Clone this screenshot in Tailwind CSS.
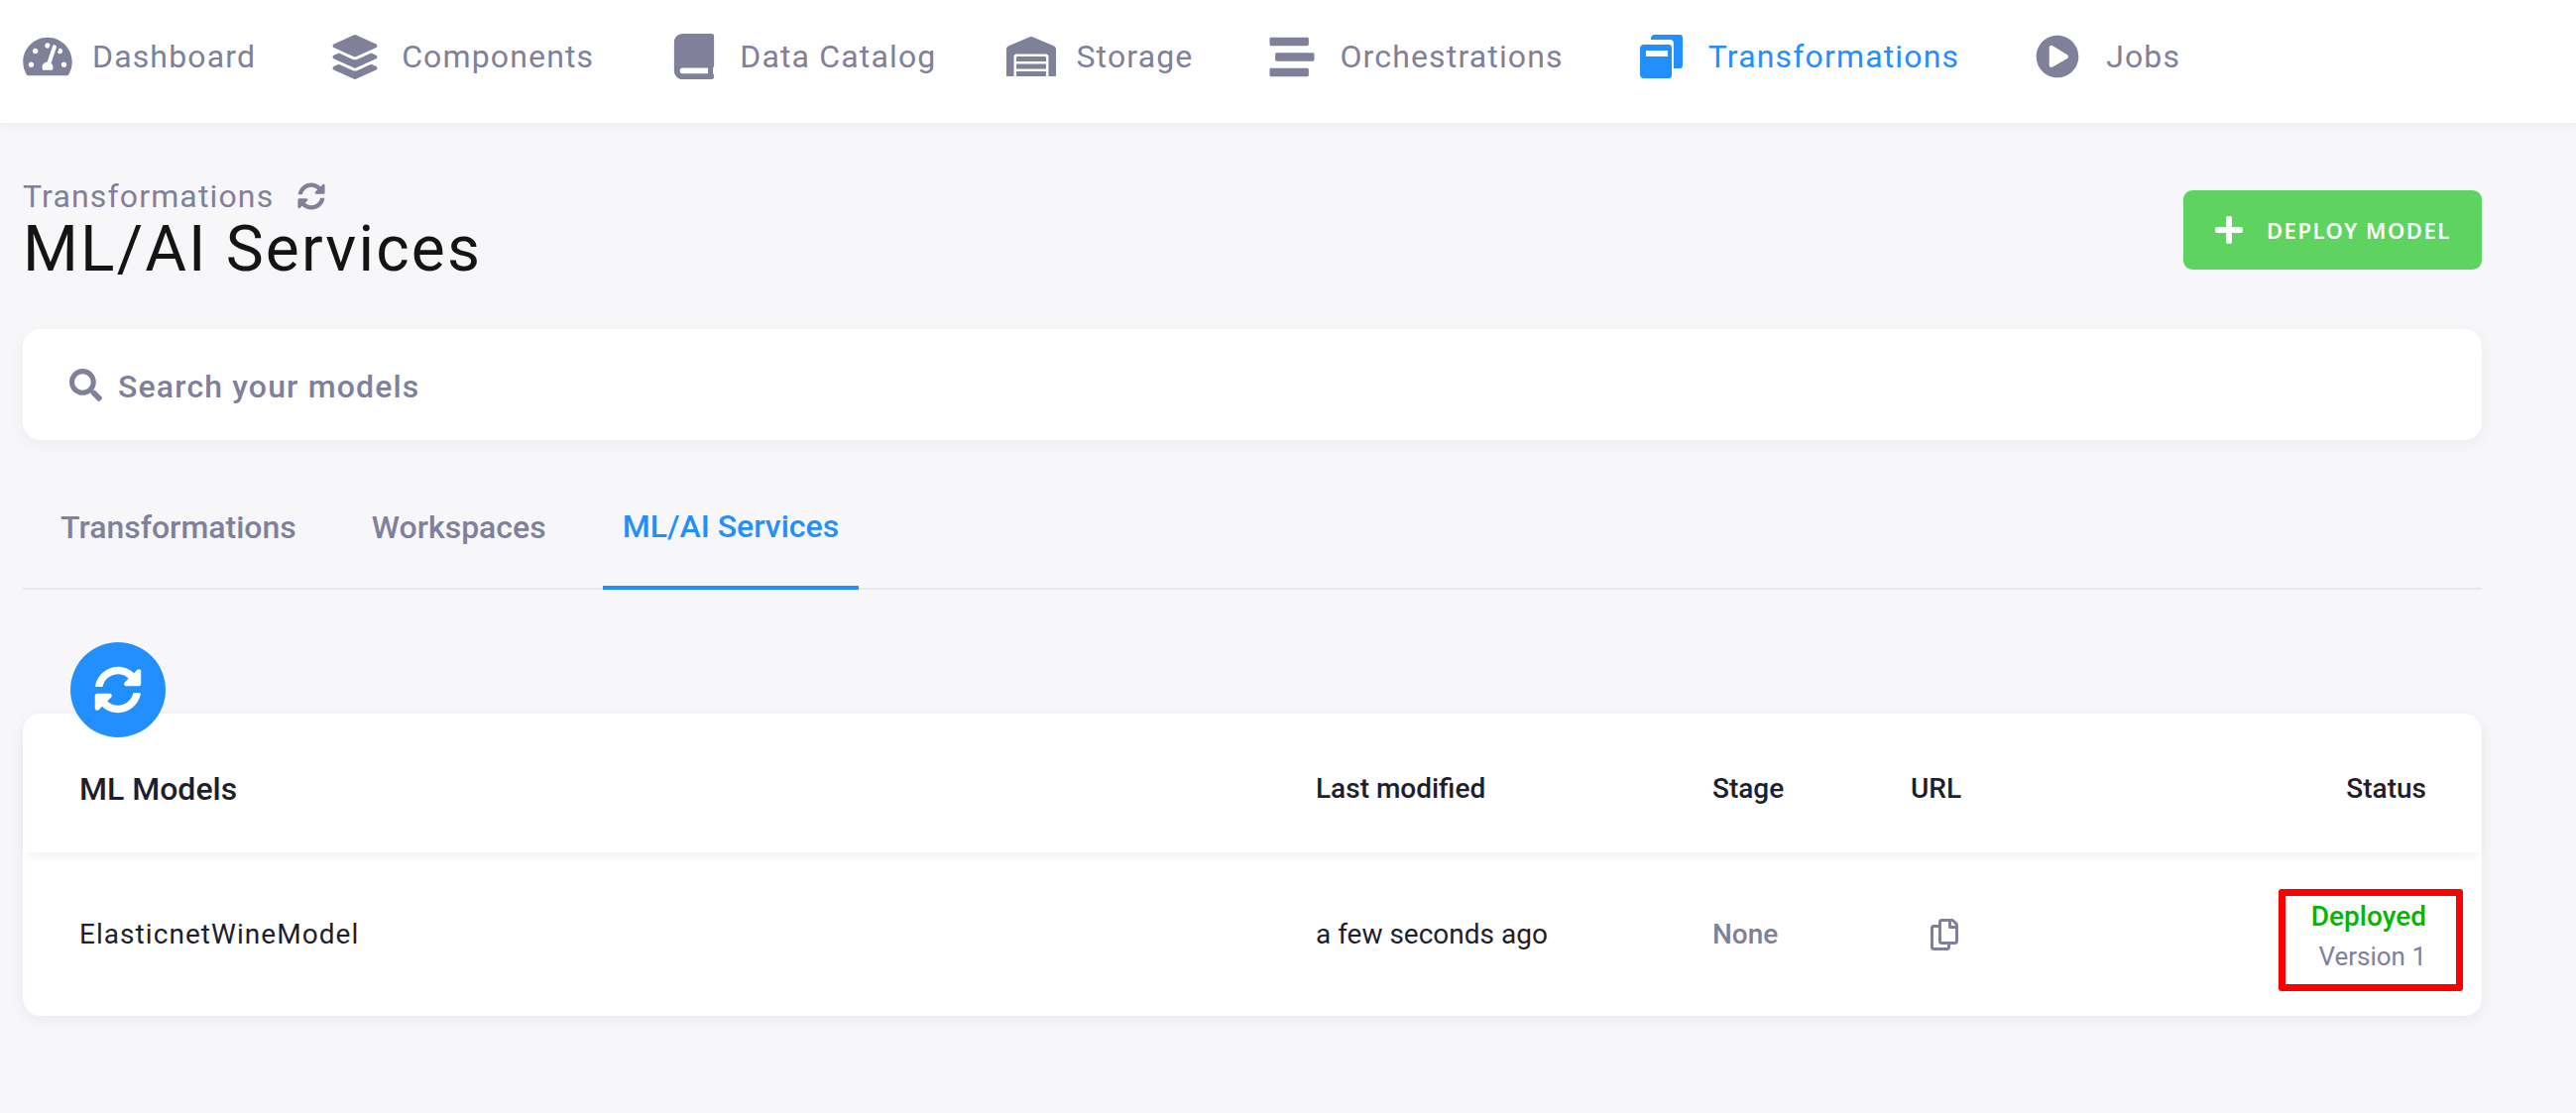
<!DOCTYPE html>
<html lang="en">
<head>
    <meta charset="UTF-8" />
    <title>ML/AI Services</title>
    <script src="https://cdn.jsdelivr.net/npm/@tailwindcss/browser@4"></script>
</head>
<body class="bg-[#f7f7fa] min-h-screen font-['Roboto',sans-serif] overflow-hidden">
    <!-- top nav -->
    <nav class="h-[124px] bg-white shadow-[0_2px_8px_rgba(30,30,60,0.06)] flex items-center pl-[23px] pb-[10px] text-[32px] tracking-[1.15px] text-[#80809a]">
        <a class="flex items-center gap-[20px] mr-[75px]">
            <svg class="w-[50px] h-[44px]" viewBox="0 0 576 512" fill="currentColor"><path d="M288 32C128.94 32 0 160.94 0 320c0 52.8 14.25 102.26 39.06 144.8 5.61 9.62 16.3 15.2 27.44 15.2h443c11.14 0 21.83-5.58 27.44-15.2C561.75 422.26 576 372.8 576 320c0-159.06-128.94-288-288-288zm0 64c14.71 0 26.58 10.13 30.32 23.65-1.11 2.26-2.64 4.23-3.45 6.67l-9.22 27.67c-5.13 3.49-10.97 6.01-17.64 6.01-17.67 0-32-14.33-32-32S270.33 96 288 96zM96 384c-17.67 0-32-14.33-32-32s14.33-32 32-32 32 14.33 32 32-14.33 32-32 32zm48-160c-17.67 0-32-14.33-32-32s14.33-32 32-32 32 14.33 32 32-14.33 32-32 32zm246.77-72.41l-61.33 184C343.13 347.33 352 364.54 352 384c0 11.72-3.38 22.55-8.88 32H232.88c-5.5-9.45-8.88-20.28-8.88-32 0-33.94 26.5-61.43 59.9-63.59l61.34-184.01c4.17-12.56 17.73-19.45 30.36-15.17 12.57 4.19 19.35 17.79 15.17 30.36zm14.66 57.2l15.52-46.55c3.47-1.29 7.13-2.23 11.05-2.23 17.67 0 32 14.33 32 32s-14.33 32-32 32c-11.38-.01-20.89-6.28-26.57-15.22zM480 384c-17.67 0-32-14.33-32-32s14.33-32 32-32 32 14.33 32 32-14.33 32-32 32z"/></svg>
            <span>Dashboard</span>
        </a>
        <a class="flex items-center gap-[22px] mr-[76px]">
            <svg class="w-[50px] h-[45px]" viewBox="0 0 512 512" fill="currentColor"><path d="M12.41 148.02l232.94 105.67c6.8 3.09 14.49 3.09 21.29 0l232.94-105.67c16.55-7.51 16.55-32.52 0-40.03L266.65 2.31a25.607 25.607 0 0 0-21.29 0L12.41 107.98c-16.55 7.51-16.55 32.53 0 40.04zm487.18 88.28l-58.09-26.33-161.64 73.27c-7.56 3.43-15.59 5.17-23.86 5.17s-16.29-1.74-23.86-5.17L70.51 209.97l-58.1 26.33c-16.55 7.5-16.55 32.5 0 40l232.94 105.59c6.8 3.08 14.49 3.08 21.29 0L499.59 276.3c16.55-7.5 16.55-32.5 0-40zm0 127.8l-57.87-26.23-161.86 73.37c-7.56 3.43-15.59 5.17-23.86 5.17s-16.29-1.74-23.86-5.17L70.29 337.87 12.41 364.1c-16.55 7.5-16.55 32.5 0 40l232.94 105.59c6.8 3.08 14.49 3.08 21.29 0L499.59 404.1c16.55-7.5 16.55-32.5 0-40z"/></svg>
            <span>Components</span>
        </a>
        <a class="flex items-center gap-[21px] mr-[71px]">
            <svg class="w-[50px] h-[46px]" viewBox="0 0 448 512" fill="currentColor"><path d="M448 360V24c0-13.3-10.7-24-24-24H96C43 0 0 43 0 96v320c0 53 43 96 96 96h328c13.3 0 24-10.7 24-24v-16c0-7.5-3.5-14.3-8.9-18.7-4.2-15.4-4.2-59.3 0-74.7 5.4-4.3 8.9-11.1 8.9-18.6zM381.4 448H96c-17.7 0-32-14.3-32-32 0-17.6 14.4-32 32-32h285.4c-1.9 17.1-1.9 46.9 0 64z"/></svg>
            <span>Data Catalog</span>
        </a>
        <a class="flex items-center gap-[20px] mr-[75px]">
            <svg class="w-[50px] h-[40px]" viewBox="0 0 640 512" fill="currentColor"><path d="M504 352H136.4c-4.4 0-8 3.6-8 8l-.1 48c0 4.4 3.6 8 8 8H504c4.4 0 8-3.6 8-8v-48c0-4.4-3.6-8-8-8zm0 96H136.1c-4.4 0-8 3.6-8 8l-.1 48c0 4.4 3.6 8 8 8h368c4.4 0 8-3.6 8-8v-48c0-4.4-3.6-8-8-8zm0-192H136.6c-4.4 0-8 3.6-8 8l-.1 48c0 4.4 3.6 8 8 8H504c4.4 0 8-3.6 8-8v-48c0-4.4-3.6-8-8-8zm106.5-139L338.4 3.7a48.15 48.15 0 0 0-36.9 0L29.5 117C11.7 124.5 0 141.9 0 161.3V504c0 4.4 3.6 8 8 8h80c4.4 0 8-3.6 8-8V256c0-17.6 14.6-32 32.6-32h382.8c18 0 32.6 14.4 32.6 32v248c0 4.4 3.6 8 8 8h80c4.4 0 8-3.6 8-8V161.3c0-19.4-11.7-36.8-29.5-44.3z"/></svg>
            <span>Storage</span>
        </a>
        <a class="flex items-center gap-[23px] mr-[73px]">
            <svg class="w-[50px] h-[45px]" viewBox="0 0 512 512" fill="currentColor"><path d="M16 128h416c8.84 0 16-7.16 16-16V48c0-8.84-7.16-16-16-16H16C7.16 32 0 39.16 0 48v64c0 8.84 7.16 16 16 16zm480 80H80c-8.84 0-16 7.16-16 16v64c0 8.84 7.16 16 16 16h416c8.84 0 16-7.16 16-16v-64c0-8.84-7.16-16-16-16zm-64 176H16c-8.84 0-16 7.16-16 16v64c0 8.84 7.16 16 16 16h416c8.84 0 16-7.16 16-16v-64c0-8.84-7.16-16-16-16z"/></svg>
            <span>Orchestrations</span>
        </a>
        <a class="flex items-center gap-[23px] mr-[74px] text-[#228fff]">
            <svg class="w-[50px] h-[44px]" viewBox="0 0 50 44" fill="currentColor"><path d="M19 0h25a3 3 0 0 1 3 3v28a3 3 0 0 1-3 3h-6V9a4 4 0 0 0-4-4H15V4a4 4 0 0 1 4-4z"/><path fill-rule="evenodd" d="M8 10h25a3 3 0 0 1 3 3v28a3 3 0 0 1-3 3H8a4 4 0 0 1-4-4V14a4 4 0 0 1 4-4zm2 6v6h22v-6z"/></svg>
            <span>Transformations</span>
        </a>
        <a class="flex items-center gap-[24px]">
            <svg class="w-[50px] h-[44px]" viewBox="0 0 512 512" fill="currentColor"><path d="M256 8C119 8 8 119 8 256s111 248 248 248 248-111 248-248S393 8 256 8zm115.7 272l-176 101c-15.8 8.8-35.7-2.5-35.7-20V149c0-17.4 19.8-28.8 35.7-20l176 107c16.4 9.2 16.4 32.9 0 44z"/></svg>
            <span>Jobs</span>
        </a>
    </nav>

    <main class="w-[2480px] ml-[23px]">
        <!-- page header -->
        <div class="flex justify-between items-start pt-[56px] h-[208px]">
            <div>
                <div class="flex items-center gap-[24px] h-[36px] text-[32px] tracking-[1.15px] text-[#80809a]">
                    <span>Transformations</span>
                    <svg class="w-[28px] h-[28px]" viewBox="0 0 512 512" fill="currentColor"><path d="M370.72 133.28C339.458 104.008 298.888 87.962 255.848 88c-77.458.068-144.328 53.178-162.791 126.85-1.344 5.363-6.122 9.15-11.651 9.15H24.103c-7.498 0-13.194-6.807-11.807-14.176C33.933 94.924 134.813 8 256 8c66.448 0 126.791 26.136 171.315 68.685L463.03 40.97C478.149 25.851 504 36.559 504 57.941V192c0 13.255-10.745 24-24 24H345.941c-21.382 0-32.09-25.851-16.971-40.971l41.75-41.749zM32 296h134.059c21.382 0 32.09 25.851 16.971 40.971l-41.75 41.75c31.262 29.273 71.835 45.319 114.876 45.28 77.418-.07 144.315-53.144 162.787-126.849 1.344-5.363 6.122-9.15 11.651-9.15h57.304c7.498 0 13.194 6.807 11.807 14.176C478.067 417.076 377.187 504 256 504c-66.448 0-126.791-26.136-171.315-68.685L48.97 471.03C33.851 486.149 8 475.441 8 454.059V320c0-13.255 10.745-24 24-24z"/></svg>
                </div>
                <h1 class="text-[64px] leading-[72px] tracking-[2.15px] text-[#141414] font-normal">ML/AI Services</h1>
            </div>
            <button class="mt-[12px] w-[301px] h-[80px] rounded-[9px] bg-[#5fd35f] text-white flex items-center pl-[32px] gap-[24px] font-['Noto_Sans',sans-serif] font-semibold text-[22px] tracking-[1.5px]">
                <svg class="w-[28px] h-[28px]" viewBox="0 0 28 28" fill="currentColor"><rect x="11" width="6" height="28" rx="2"/><rect y="11" width="28" height="6" rx="2"/></svg>
                DEPLOY MODEL
            </button>
        </div>

        <!-- search -->
        <div class="h-[112px] bg-white rounded-[18px] shadow-[0_4px_16px_rgba(30,30,60,0.05)] flex items-center pl-[47px] gap-[16px] text-[#80809a]">
            <svg class="w-[33px] h-[33px]" viewBox="0 0 512 512" fill="currentColor"><path d="M505 442.7L405.3 343c-4.5-4.5-10.6-7-17-7H372c27.6-35.3 44-79.7 44-128C416 93.1 322.9 0 208 0S0 93.1 0 208s93.1 208 208 208c48.3 0 92.7-16.4 128-44v16.3c0 6.4 2.5 12.5 7 17l99.7 99.7c9.4 9.4 24.6 9.4 33.9 0l28.3-28.3c9.4-9.4 9.4-24.6.1-34zM208 336c-70.7 0-128-57.2-128-128 0-70.7 57.2-128 128-128 70.7 0 128 57.2 128 128 0 70.7-57.2 128-128 128z"/></svg>
            <span class="relative top-[2px] text-[32px] font-medium tracking-[1.15px]">Search your models</span>
        </div>

        <!-- tabs -->
        <div class="mt-[32px] h-[119px] border-b-2 border-[#e6e7ee] flex text-[32px] font-medium text-[#80809a]">
            <a class="px-[38px] pb-[8px] flex items-center h-[119px]">Transformations</a>
            <a class="px-[38px] pb-[8px] flex items-center h-[119px]">Workspaces</a>
            <a class="ml-[19px] px-[20px] pb-[6px] flex items-center h-[119px] text-[#228fff] border-b-4 border-[#228fff]">ML/AI Services</a>
        </div>

        <!-- models table -->
        <div class="relative mt-[125px] h-[305px] bg-white rounded-[18px] shadow-[0_4px_16px_rgba(30,30,60,0.06)] text-[#1e1e2d]">
            <button class="absolute left-[48px] -top-[72px] w-[96px] h-[96px] rounded-full bg-[#228fff] text-white flex items-center justify-center">
                <svg class="w-[48px] h-[48px]" viewBox="0 0 512 512" fill="currentColor"><path d="M370.72 133.28C339.458 104.008 298.888 87.962 255.848 88c-77.458.068-144.328 53.178-162.791 126.85-1.344 5.363-6.122 9.15-11.651 9.15H24.103c-7.498 0-13.194-6.807-11.807-14.176C33.933 94.924 134.813 8 256 8c66.448 0 126.791 26.136 171.315 68.685L463.03 40.97C478.149 25.851 504 36.559 504 57.941V192c0 13.255-10.745 24-24 24H345.941c-21.382 0-32.09-25.851-16.971-40.971l41.75-41.749zM32 296h134.059c21.382 0 32.09 25.851 16.971 40.971l-41.75 41.75c31.262 29.273 71.835 45.319 114.876 45.28 77.418-.07 144.315-53.144 162.787-126.849 1.344-5.363 6.122-9.15 11.651-9.15h57.304c7.498 0 13.194 6.807 11.807 14.176C478.067 417.076 377.187 504 256 504c-66.448 0-126.791-26.136-171.315-68.685L48.97 471.03C33.851 486.149 8 475.441 8 454.059V320c0-13.255 10.745-24 24-24z"/></svg>
            </button>
            <div class="h-[140px] grid grid-cols-[1247px_400px_200px_1fr] items-center pl-[57px] pr-[56px] pt-[12px] shadow-[0_6px_12px_-4px_rgba(30,30,60,0.08)] rounded-t-[18px] text-[28px] font-medium">
                <span class="text-[32px]">ML Models</span>
                <span>Last modified</span>
                <span>Stage</span>
                <span>URL</span>
                <span class="justify-self-end col-start-5">Status</span>
            </div>
            <div class="h-[165px] grid grid-cols-[1247px_400px_200px_1fr] items-center pl-[57px] pr-[56px] text-[28px]">
                <span class="tracking-[1.05px]">ElasticnetWineModel</span>
                <span>a few seconds ago</span>
                <span class="font-medium text-[#80809a]">None</span>
                <svg class="w-[28px] h-[32px] ml-[20px] text-[#80809a]" viewBox="0 0 448 512" fill="currentColor"><path d="M433.941 65.941l-51.882-51.882A48 48 0 0 0 348.118 0H176c-26.51 0-48 21.49-48 48v48H48c-26.51 0-48 21.49-48 48v320c0 26.51 21.49 48 48 48h224c26.51 0 48-21.49 48-48v-48h80c26.51 0 48-21.49 48-48V99.882a48 48 0 0 0-14.059-33.941zM266 464H54a6 6 0 0 1-6-6V150a6 6 0 0 1 6-6h74v224c0 26.51 21.49 48 48 48h96v42a6 6 0 0 1-6 6zm128-96H182a6 6 0 0 1-6-6V54a6 6 0 0 1 6-6h106v88c0 13.255 10.745 24 24 24h88v198a6 6 0 0 1-6 6zm6-256h-64V48h9.632c1.591 0 3.117.632 4.243 1.757l48.368 48.368a6 6 0 0 1 1.757 4.243V112z"/></svg>
                <div class="col-start-5 justify-self-end text-right relative top-[2px]">
                    <div class="text-[#00b800] font-medium leading-[40px]">Deployed</div>
                    <div class="text-[#80809a] text-[26px] leading-[40px]">Version 1</div>
                    <div class="absolute -left-[33px] -right-[37px] -top-[8px] -bottom-[15px] border-[7px] border-[#ff0000] rounded-[3px]"></div>
                </div>
            </div>
        </div>
    </main>
</body>
</html>
